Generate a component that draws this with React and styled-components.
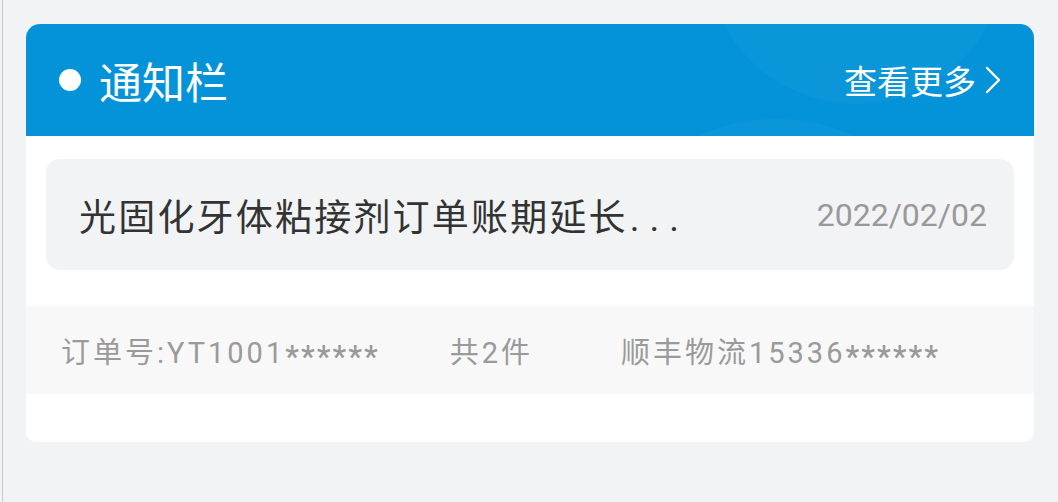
import React from "react";
import styled, { createGlobalStyle } from "styled-components";

const Global = createGlobalStyle`
  html, body { margin: 0; padding: 0; background: #f2f3f5; }
  body { font-family: Roboto, "Noto Sans CJK SC", sans-serif; }
  * { box-sizing: border-box; }
`;

const Page = styled.div`
  width: 1056px;
  height: 502px;
  padding: 24px 24px 0 23px;
  border-left: 1px solid #c9c9cb;
  margin-left: 2px;
  overflow: hidden;
`;

const Card = styled.section`
  background: #ffffff;
  border-radius: 14px 14px 10px 10px;
  overflow: hidden;
`;

const Header = styled.header`
  position: relative;
  height: 112px;
  background: #0493d9;
  display: flex;
  align-items: center;
  padding: 0 33px 0 33px;
  overflow: hidden;
`;

const Bubble = styled.span`
  position: absolute;
  border-radius: 50%;
  background: rgba(255, 255, 255, 0.03);
  pointer-events: none;
`;

const Dot = styled.span`
  width: 22px;
  height: 22px;
  border-radius: 50%;
  background: #ffffff;
  margin-right: 18px;
  flex-shrink: 0;
  position: relative;
`;

const Title = styled.h2`
  margin: 0;
  font-family: "Noto Sans CJK SC", sans-serif;
  font-weight: 400;
  font-size: 43px;
  color: #ffffff;
  line-height: 1;
  position: relative;
`;

const More = styled.a`
  margin-left: auto;
  display: flex;
  align-items: center;
  gap: 9px;
  font-family: "Noto Sans CJK SC", sans-serif;
  font-size: 33px;
  color: #ffffff;
  text-decoration: none;
  line-height: 1;
  position: relative;
`;

const Body = styled.div`
  padding: 23px 20px 0;
`;

const Notice = styled.div`
  height: 111px;
  background: #f2f3f5;
  border-radius: 14px;
  display: flex;
  align-items: center;
  padding: 0 27px 0 33px;
`;

const NoticeTitle = styled.span`
  font-family: "Noto Sans CJK SC", sans-serif;
  font-size: 37px;
  letter-spacing: 2.2px;
  color: #333333;
`;

const Dots = styled.span`
  font-family: Roboto, sans-serif;
  letter-spacing: 10px;
  margin-left: 2px;
`;

const NoticeDate = styled.span`
  margin-left: auto;
  font-family: Roboto, sans-serif;
  font-size: 32px;
  color: #999999;
`;

const InfoRow = styled.div`
  margin-top: 36px;
  height: 88px;
  background: #f8f8f9;
  display: flex;
  align-items: center;
  padding-left: 35px;
`;

const InfoItem = styled.span`
  font-family: Roboto, "Noto Sans CJK SC", sans-serif;
  font-size: 29px;
  letter-spacing: 3px;
  color: #9a9a9a;
  margin-right: ${(p) => p.$gap || 0}px;
  white-space: nowrap;
`;

const Stars = styled.span`
  display: inline-block;
  font-size: 31px;
  font-weight: 500;
  letter-spacing: 2px;
  transform: translateY(4px);
`;

const Footer = styled.div`
  height: 48px;
`;

export default function App() {
  return (
    <>
      <Global />
      <Page>
        <Card>
          <Header>
            <Bubble style={{ width: 300, height: 300, left: 680, top: -220 }} />
            <Bubble style={{ width: 380, height: 380, left: 560, top: 95 }} />
            <Dot />
            <Title>通知栏</Title>
            <More href="#">
              查看更多
              <svg width="16" height="28" viewBox="0 0 16 28" fill="none">
                <path d="M2 2 L14 14 L2 26" stroke="#fff" strokeWidth="2.4" strokeLinecap="round" strokeLinejoin="round" />
              </svg>
            </More>
          </Header>
          <Body>
            <Notice>
              <NoticeTitle>
                光固化牙体粘接剂订单账期延长<Dots>...</Dots>
              </NoticeTitle>
              <NoticeDate>2022/02/02</NoticeDate>
            </Notice>
          </Body>
          <InfoRow>
            <InfoItem $gap={70}>
              订单号:YT1001<Stars>******</Stars>
            </InfoItem>
            <InfoItem $gap={88}>共2件</InfoItem>
            <InfoItem>
              顺丰物流15336<Stars>******</Stars>
            </InfoItem>
          </InfoRow>
          <Footer />
        </Card>
      </Page>
    </>
  );
}
